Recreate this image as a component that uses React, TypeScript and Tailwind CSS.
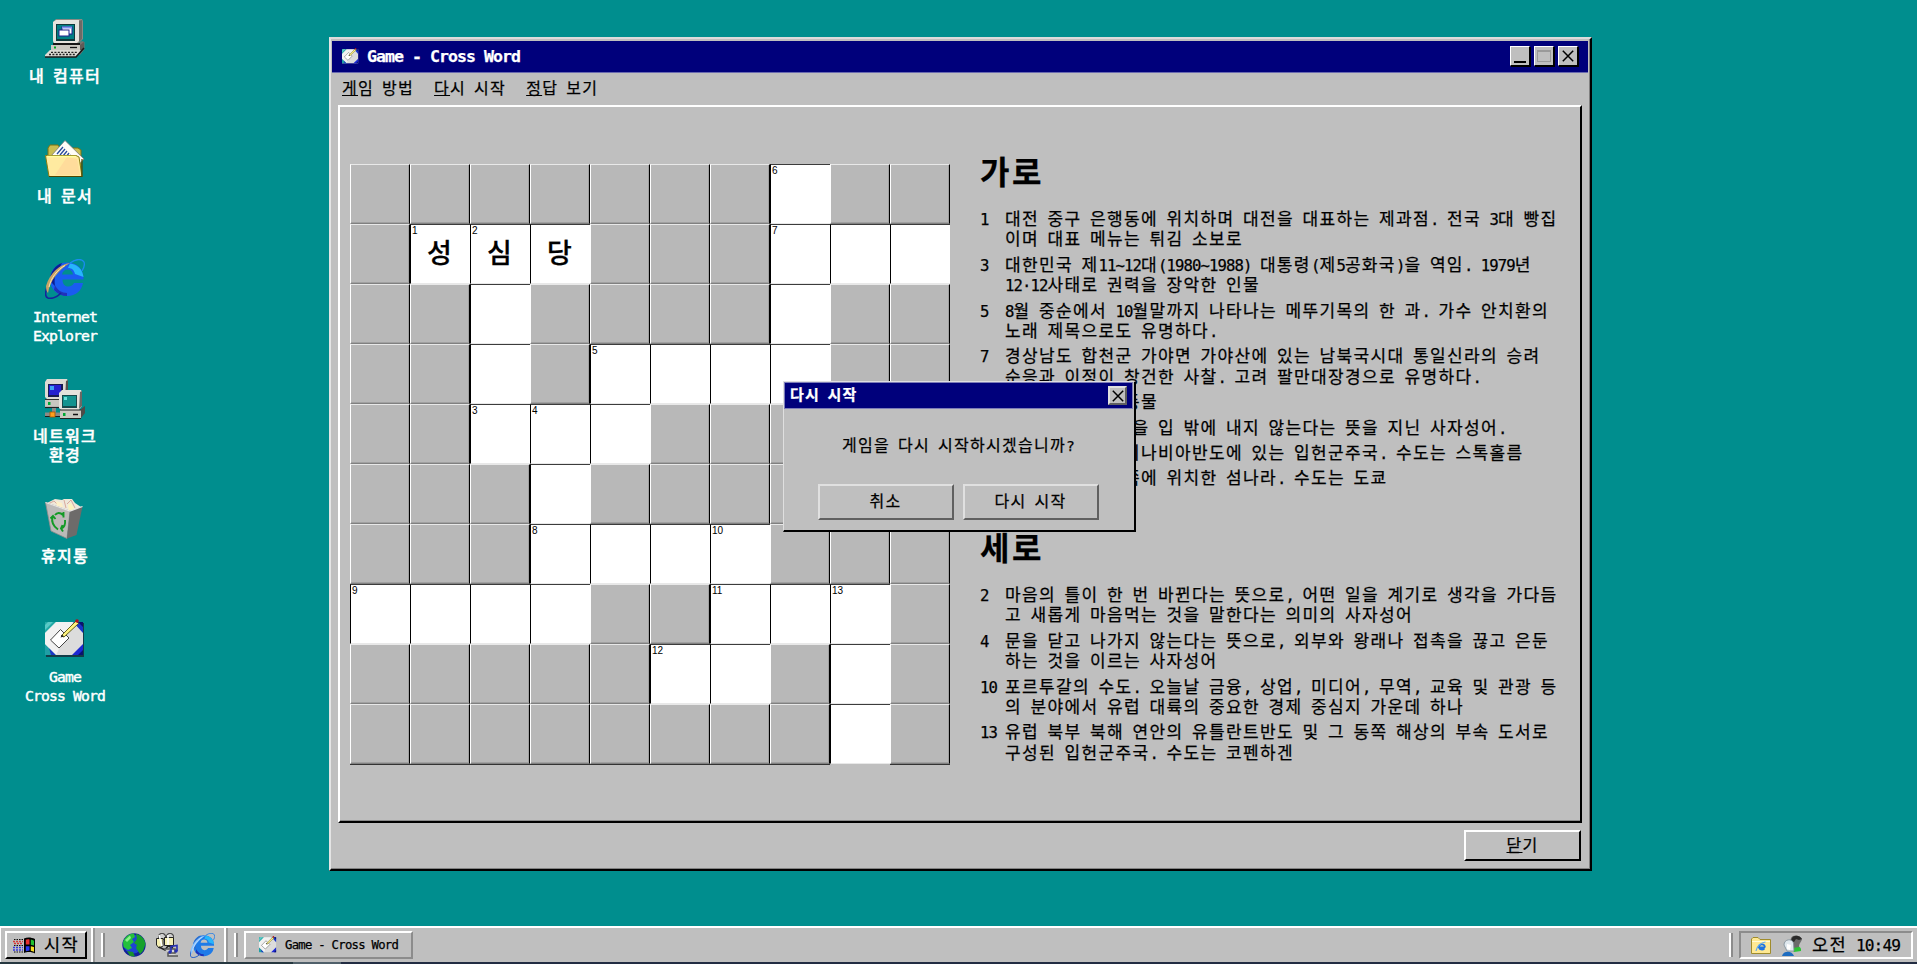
import { Fragment, type ReactNode } from "react";

/* ---------- text ---------- */

// Half-width characters take half an em and Hangul takes a full em, as in a DOS-style bitmap face.
function T({ children }: { children: string }) {
  const runs = children.match(/[\uac00-\ud7a3]+|[^\uac00-\ud7a3]+/g) ?? [];
  return (
    <span className="whitespace-pre">
      {runs.map((run, i) =>
        /[\uac00-\ud7a3]/.test(run) ? (
          <span key={i} className="tracking-[0.08em]">
            {run}
          </span>
        ) : (
          <span key={i} className="text-[0.92em] tracking-[-0.0585em]">
            {run}
          </span>
        ),
      )}
    </span>
  );
}

/* ---------- icons ---------- */

function ComputerIcon({ className }: { className?: string }) {
  return (
    <svg viewBox="0 0 40 40" className={className}>
      <path d="M8 3 11 0H37L38 2V20L33 25H10L8 23Z" fill="#8a8a84" />
      <path d="M8 3 11 1H34V22L32 24H9L8 22Z" fill="#e6e4de" />
      <path d="M34 2 37 1V20L34 23Z" fill="#6d6a66" />
      <rect x="11" y="5" width="19" height="17" fill="#10393c" />
      <rect x="12" y="6" width="17" height="14" fill="#007f82" />
      <rect x="17" y="8" width="10" height="7" fill="#fff" stroke="#22228e" />
      <path d="M17 8.500H27" stroke="#7f8ff0" strokeWidth="2" />
      <rect x="14" y="11" width="10" height="6" fill="#fff" stroke="#22228e" />
      <path d="M8 24H34L37 22 39.500 23V30L35 36H28" fill="#77736f" />
      <rect x="8" y="24" width="27" height="2" fill="#161616" />
      <path d="M6 26H35V32H6Z" fill="#cbc9c2" />
      <path d="M35 26 39 23V30L35 34Z" fill="#5f5c58" />
      <path d="M9 28.500H11" stroke="#00a51c" strokeWidth="2" />
      <path d="M25 28.500H32" stroke="#111" strokeWidth="1.300" />
      <path d="M5 31H36L31 38H0V36Z" fill="#dedcd6" />
      <path d="M0 38H31L39 29" stroke="#1a1a1a" strokeWidth="1.600" fill="none" />
      <path d="M6 33.300H32M4 35.500H30" stroke="#222" strokeWidth="1.300" strokeDasharray="2 1.400" />
    </svg>
  );
}

function DocumentsIcon({ className }: { className?: string }) {
  return (
    <svg viewBox="0 0 40 40" className={className}>
      <path d="M3 16V9L5 6H13L15 9H33L36 11V35H4Z" fill="#c9bd52" stroke="#7c7310" />
      <path d="M20 1.500 39 20 28 32 6 17Z" fill="#fffdf7" stroke="#777" strokeWidth=".8" />
      <path d="M12 15 18 8M15 16 20 10M18 17 22 12M21 18 24 14M24 18 26 16" stroke="#284b9c" strokeWidth="1.300" />
      <path d="M.5 16.500H31L34 18 37 37.500H4Z" fill="#ffeaa0" stroke="#8c7d10" />
      <path d="M22 18 32 20 35 36H10Z" fill="#ffcf98" opacity=".55" />
      <path d="M2 17.500H31" stroke="#ffff9c" strokeWidth="1.500" />
      <path d="M4 37.500H37V20" stroke="#514600" strokeWidth="1.200" fill="none" />
    </svg>
  );
}

function ExplorerIcon({ className, light }: { className?: string; light?: boolean }) {
  const body = light ? "#1f7be8" : "#1a5cf0";
  return (
    <svg viewBox="0 0 40 40" className={className}>
      <path
        d="M38.500 20.500H17.500C17.500 25 20 27.500 23 27.500 26 27.500 28 26 29 24H38C36.500 32 30.500 37 22.500 37 12.500 37 5 30 5 20.500 5 10.500 12.500 3.500 22 3.500 32 3.500 39 10 38.500 20.500ZM17 15.500H28C27.500 12 25.500 10.500 22.500 10.500 19.500 10.500 17.500 12.500 17 15.500Z"
        fill={body}
      />
      <path d="M25 4.500C32 5 37.500 10 38.500 18L30 15C29 11 27 9 23 9Z" fill="#27b6fb" />
      <path d="M5 22C5 13 10 6 17 4L14 10C10 14 9 18 10 27Z" fill={light ? "#2c6fd0" : "#0a1f95"} />
      <path d="M22 34C17 34 12 31 10 26L9 31C13 35 17 37 22 37Z" fill="#2031b8" />
      <path
        d="M25 4C31 -.5 37 -.5 39 3 40 6 39 9 37 12"
        fill="none"
        stroke={light ? "#1f7be8" : "#1a8cf0"}
        strokeWidth="1.300"
      />
      <path
        d="M2 28C0 34 0 38 3 39 7 40 12 38 16 34"
        fill="none"
        stroke={light ? "#2b62c8" : "#16239c"}
        strokeWidth="1.600"
      />
      <path d="M25 4C15 5 5 14 1 27 1 31 2 33 3 34 5 22 13 11 25 4Z" fill={light ? "#86c0ff" : "#c9a465"} />
      <path d="M20 6.500C12 11 6 19 4 28" stroke={light ? "#d6ecff" : "#f6e3b4"} strokeWidth="1" fill="none" />
    </svg>
  );
}

function NetworkIcon({ className }: { className?: string }) {
  return (
    <svg viewBox="0 0 40 40" className={className}>
      <path d="M0 3 2 0H22L23 2V18L20 20H2L0 18Z" fill="#dddbd4" />
      <path d="M21 2 23 1V18L20 20Z" fill="#55524e" />
      <rect x="3" y="5" width="15" height="13" fill="#181b52" />
      <rect x="4" y="6" width="12" height="10" fill="#2520cf" />
      <path d="M5 7H9V11H5Z" fill="#3da2f5" />
      <path d="M0 20H20V28H0Z" fill="#c9c7c0" />
      <path d="M0 20.500H18" stroke="#333" />
      <path d="M0 28.500H18" stroke="#222" strokeWidth="1.200" />
      <rect x="3" y="23" width="2.500" height="3" fill="#00a832" />
      <path d="M7 29H11V34H7Z" fill="#8d8a85" />
      <path d="M0 35.500H17" stroke="#8d8a85" strokeWidth="4" />
      <path d="M0 37.500H17" stroke="#1d1d1d" />
      <rect x="5" y="33" width="5" height="5" fill="#ffa01c" stroke="#a85600" strokeWidth=".8" />
      <path d="M14 14 17 11H36L37 13V27L34 31H16L14 29Z" fill="#e4e2dc" />
      <path d="M35 13 37 12V27L34 30Z" fill="#6b6864" />
      <rect x="17" y="16" width="15" height="13" fill="#16494b" />
      <rect x="18" y="17" width="13" height="10" fill="#13938f" />
      <path d="M19 18H22V21H19Z" fill="#6be0dc" />
      <path d="M36 30 40 27V34L36 39Z" fill="#4e4b48" />
      <path d="M15 31H36V39H15Z" fill="#cbc9c2" />
      <path d="M15 31H36M15 39.500H36" stroke="#222" strokeWidth="1.200" />
      <rect x="18" y="34" width="2.500" height="3" fill="#00a832" />
      <path d="M28 35.500H33" stroke="#111" strokeWidth="1.500" />
    </svg>
  );
}

function RecycleIcon({ className }: { className?: string }) {
  return (
    <svg viewBox="0 0 40 40" className={className}>
      <path d="M2 4 10 0 17 1 19 0H27L30 4 36 8 26 13 8 9Z" fill="#efe8da" />
      <path d="M3 5 9 2 15 8M19 1 21 9M22 5 26 1 30 9" stroke="#d9a99c" strokeWidth="1" fill="none" />
      <path d="M23 6 26 4 30 11 24 12Z" fill="#fdf3bd" />
      <path d="M11 2 17 4 18 9 12 8Z" fill="#fdf0c8" />
      <path d="M.5 3.500 25 12 22 39.500 6 32Z" fill="#bcbab9" stroke="#8e8c8b" strokeWidth=".8" />
      <path d="M25 12 37.500 7.500 31.500 36 22 39.500Z" fill="#6d6b6a" />
      <path d="M.5 3.500 25 12 37.500 7.500" stroke="#e8e6e4" strokeWidth="1.200" fill="none" />
      <path d="M10 16C12 13.500 15 13 18 16M18.500 13V18.500" stroke="#139a26" strokeWidth="1.900" fill="none" />
      <path d="M7.500 18C6.500 22 8 27 13 30.500M5.500 19.500 8 17 10.500 20" stroke="#139a26" strokeWidth="1.900" fill="none" />
      <path d="M20 21C20.500 25 19.500 28 16.500 29.500M17.500 26 16 29.500 18 32.500" stroke="#139a26" strokeWidth="1.900" fill="none" />
    </svg>
  );
}

function CrosswordIcon({ className, clear }: { className?: string; clear?: boolean }) {
  return (
    <svg viewBox="0 0 40 40" className={className}>
      {!clear && <path d="M1 4H39V38H1Z" fill="#123c48" />}
      <rect x="0" y="3" width="38" height="33" fill="#dcdcdc" />
      <path d="M0 3H11L0 14Z" fill="#21a9a6" />
      <path d="M3 3H8L0 11V6Z" fill="#7fe0dc" opacity=".6" />
      <path d="M0 25 11 36H0Z" fill="#1f9fa5" />
      <path d="M4 29 11 36H6Z" fill="#1b37c4" />
      <path d="M38 3V14L28 3Z" fill="#1735c8" />
      <path d="M38 25V36H27Z" fill="#1b28d2" />
      <path d="M38 3V8L33 3ZM38 31V36H33Z" fill="#0a1170" />
      <path d="M11 3H28L14 30 11 36 0 25V14Z" fill="#fff" opacity=".6" />
      <path d="M5.500 21 15.500 10.500 24 19 14 29Z" fill="#fff" stroke="#444" strokeWidth="1" />
      <path d="M16 17 31 2 33.500 4.500 19 18Z" fill="#fff27e" stroke="#57520d" strokeWidth=".9" />
      <path d="M15.500 18.500 17 15.500 19 17.500Z" fill="#222" />
      <circle cx="32" cy="2" r="1.800" fill="#b30f1d" />
    </svg>
  );
}

function WindowsFlag({ className }: { className?: string }) {
  return (
    <svg viewBox="0 0 22 17" className={className}>
      <path d="M11 1.500C14 0 18 0 22 2V16.500C19 14.500 14 14.500 11 16Z" fill="#000" />
      <path d="M12.800 2.800C14 2 15.300 2 16.500 2.400V7.500H12.800Z" fill="#e83030" />
      <path d="M17.800 2.600C19 2.900 20 3.200 21 3.800V8.500L17.800 7.700Z" fill="#20c030" />
      <path d="M12.800 9.200H16.500V13.600L12.800 14.200Z" fill="#2838f0" />
      <path d="M17.800 9.200 21 10V14.800L17.800 13.800Z" fill="#f8e020" />
      <path d="M1 2.500H10M1 8.500H10M1 15H10" stroke="#111" strokeWidth="1.200" strokeDasharray="1.500 1" />
      <path d="M0 4.500H10M1 6.500H10" stroke="#d83838" strokeWidth="1.300" strokeDasharray="2 1" />
      <path d="M0 10.500H10M0 13H10" stroke="#3838e0" strokeWidth="1.300" strokeDasharray="2 1" />
    </svg>
  );
}

function GlobeIcon({ className }: { className?: string }) {
  return (
    <svg viewBox="0 0 24 24" className={className}>
      <circle cx="12" cy="12" r="11.700" fill="#12209a" />
      <circle cx="11" cy="11" r="9.500" fill="#1d44d4" />
      <path d="M1 9C3 3 8 .5 12 .5L13 4 10 6 12 9 8 12 10 15 6 17 1.500 14Z" fill="#25c03c" />
      <path d="M14 1C20 2 23 7 23.500 11L21 18 18 21 14 15 15 12 12 10 15 6Z" fill="#16a02c" />
      <path d="M5 18 11 19 13 23.500 8 23Z" fill="#17922b" />
      <path d="M3 7 8 2.500 9 5 5 9Z" fill="#8cf08a" />
    </svg>
  );
}

function MediaIcon({ className }: { className?: string }) {
  return (
    <svg viewBox="0 0 24 24" className={className}>
      <rect x="2.500" y=".5" width="7" height="6" rx="3" fill="#cfcfcf" stroke="#222" />
      <rect x="10.500" y=".5" width="7" height="6" rx="3" fill="#cfcfcf" stroke="#222" />
      <path d="M.5 5.500H7V13L3 15 .5 12Z" fill="#f5efb2" stroke="#222" />
      <path d="M8.500 4.500H17.500V12.500H8.500Z" fill="#f5efb2" stroke="#222" />
      <path d="M3 2 6 13M12 2 12 12" stroke="#fff" strokeWidth="1.500" />
      <path d="M3 14 9 17 12 13 17 15" stroke="#222" strokeWidth="1.500" fill="none" />
      <path d="M8 16H19V20H12V23H22" stroke="#555" strokeWidth="1.500" fill="#d8d8d8" />
      <path d="M15 19V13.500L21 12.500V18" stroke="#2630b4" strokeWidth="1.600" fill="none" />
      <circle cx="14" cy="19" r="1.700" fill="#2630b4" />
      <circle cx="20" cy="18" r="1.700" fill="#2630b4" />
    </svg>
  );
}

function FolderGlobeIcon({ className }: { className?: string }) {
  return (
    <svg viewBox="0 0 20 17" className={className}>
      <path d="M.5 16.500V2L2 .5H7L9 2.500H19.500V16.500Z" fill="#ffe993" stroke="#a08c2c" />
      <path d="M1 4.500H19" stroke="#fffbd8" />
      <path d="M14 10.500H8C8.500 12.500 11 13 13.500 12" stroke="#1f74e0" strokeWidth="1.800" fill="none" />
      <path d="M8 10.500C8 6.500 13.500 6 14 10.500" stroke="#1f74e0" strokeWidth="1.800" fill="none" />
      <path d="M14.500 5C10 5.500 6 9 5 14" stroke="#5fa8ee" strokeWidth="1.200" fill="none" />
    </svg>
  );
}

function PeopleIcon({ className }: { className?: string }) {
  return (
    <svg viewBox="0 0 20 21" className={className}>
      <path d="M10 14C10 11 18 10 19 14V16L12 17Z" fill="#2bc435" />
      <path d="M9 3C11 -1 18 0 20 4 19.500 7 17 8 17 12L11 13 8 7Z" fill="#6a6a6a" />
      <path d="M10 3C12 -.5 18 0 20 4L17 5 14 4 12 7 9 6Z" fill="#2a2a2a" />
      <path d="M2 10C2 4 10 3 11.500 8L12 16H5Z" fill="#dfe8ee" stroke="#7b8a94" strokeWidth=".8" />
      <path d="M5 9 9 10 8 15 5 14Z" fill="#fff" />
      <path d="M0 21C1 15.500 10 15 12 21Z" fill="#1d6cc0" />
    </svg>
  );
}

function CrossMark({ className }: { className?: string }) {
  return (
    <svg viewBox="0 0 12 12" className={className}>
      <path d="M.8 .8 11.200 11.200M11.200 .8 .8 11.200" stroke="#000" strokeWidth="1.500" />
    </svg>
  );
}

/* ---------- data ---------- */

const GRID = [
  ".......#..",
  ".###...###",
  "..#....#..",
  "..#.####..",
  "..###.....",
  "...#......",
  "...####...",
  "####..###.",
  ".....##.#.",
  "........#.",
];

const NUMBERS: Record<string, number> = {
  "0-7": 6,
  "1-1": 1,
  "1-2": 2,
  "1-7": 7,
  "3-4": 5,
  "4-2": 3,
  "4-3": 4,
  "6-3": 8,
  "6-6": 10,
  "7-0": 9,
  "7-6": 11,
  "7-8": 13,
  "8-5": 12,
};

const LETTERS: Record<string, string> = { "1-1": "성", "1-2": "심", "1-3": "당" };

type Clue = { no: number; lines: string[] };

const ACROSS: Clue[] = [
  { no: 1, lines: ["대전 중구 은행동에 위치하며 대전을 대표하는 제과점. 전국 3대 빵집", "이며 대표 메뉴는 튀김 소보로"] },
  { no: 3, lines: ["대한민국 제11~12대(1980~1988) 대통령(제5공화국)을 역임. 1979년", "12·12사태로 권력을 장악한 인물"] },
  { no: 5, lines: ["8월 중순에서 10월말까지 나타나는 메뚜기목의 한 과. 가수 안치환의", "노래 제목으로도 유명하다."] },
  { no: 7, lines: ["경상남도 합천군 가야면 가야산에 있는 남북국시대 통일신라의 승려", "순응과 이정이 창건한 사찰. 고려 팔만대장경으로 유명하다."] },
  { no: 8, lines: ["중생대에 살던 동물"] },
  { no: 9, lines: ["하려던 이야기들을 입 밖에 내지 않는다는 뜻을 지닌 사자성어."] },
  { no: 11, lines: ["유럽 북부 스칸디나비아반도에 있는 입헌군주국. 수도는 스톡홀름"] },
  { no: 12, lines: ["아시아 대륙 동쪽에 위치한 섬나라. 수도는 도쿄"] },
];

const DOWN: Clue[] = [
  { no: 2, lines: ["마음의 틀이 한 번 바뀐다는 뜻으로, 어떤 일을 계기로 생각을 가다듬", "고 새롭게 마음먹는 것을 말한다는 의미의 사자성어"] },
  { no: 4, lines: ["문을 닫고 나가지 않는다는 뜻으로, 외부와 왕래나 접촉을 끊고 은둔", "하는 것을 이르는 사자성어"] },
  { no: 10, lines: ["포르투갈의 수도. 오늘날 금융, 상업, 미디어, 무역, 교육 및 관광 등", "의 분야에서 유럽 대륙의 중요한 경제 중심지 가운데 하나"] },
  { no: 13, lines: ["유럽 북부 북해 연안의 유틀란트반도 및 그 동쪽 해상의 부속 도서로", "구성된 입헌군주국. 수도는 코펜하겐"] },
];

/* ---------- pieces ---------- */

function DesktopItem({ icon, lines }: { icon: ReactNode; lines: string[] }) {
  return (
    <div className="flex h-[120px] w-[130px] flex-col items-center">
      {icon}
      <div className="mt-2 text-center text-[16px] leading-[19px] font-medium text-white [-webkit-text-stroke:0.45px]">
        {lines.map((l) => (
          <div key={l} className="h-[19px]">
            <T>{l}</T>
          </div>
        ))}
      </div>
    </div>
  );
}

function Cell({ r, c }: { r: number; c: number }) {
  const key = `${r}-${c}`;
  const open = GRID[r][c] === "#";
  if (!open) {
    return (
      <div
        className={
          "size-[60px] border border-t-[#e8e8e8] border-r-black border-b-[#808080] border-l-white bg-[#b8b8b8] inset-shadow-[-1px_-1px_0_#a0a0a0] " +
          (r === 9 ? "shadow-[0_1px_0_#333]" : "")
        }
      />
    );
  }
  return (
    <div className="relative flex size-[60px] items-center justify-center border-t border-b border-l border-t-[#3c3c3c] border-b-[#e8e8e8] border-l-black bg-white">
      {NUMBERS[key] && (
        <span className="absolute top-0 left-px font-['Liberation_Sans',sans-serif] text-[10px] leading-[11px] [-webkit-text-stroke:0]">
          {NUMBERS[key]}
        </span>
      )}
      {LETTERS[key] && <span className="mr-0.5 mb-0.5 text-[27px] leading-none font-medium">{LETTERS[key]}</span>}
    </div>
  );
}

function ClueList({ title, clues }: { title: string; clues: Clue[] }) {
  return (
    <section>
      <h2 className="h-[38px] text-[32px] leading-[38px] font-bold">
        <T>{title}</T>
      </h2>
      <dl className="mt-[17px] grid grid-cols-[25px_1fr] gap-y-[5px] text-[17px] leading-[20.4px] whitespace-nowrap">
        {clues.map((clue) => (
          <Fragment key={clue.no}>
            <dt className="h-[20.4px]">
              <T>{String(clue.no)}</T>
            </dt>
            <dd>
              {clue.lines.map((l) => (
                <div key={l} className="h-[20.4px]">
                  <T>{l}</T>
                </div>
              ))}
            </dd>
          </Fragment>
        ))}
      </dl>
    </section>
  );
}

const capButton =
  "flex size-5 items-center justify-center border border-t-white border-r-black border-b-black border-l-white bg-[#bfbfbf] shadow-[1px_1px_0_#000]";

function GameWindow() {
  return (
    <div className="absolute top-[37px] left-[329px] flex h-[834px] w-[1263px] flex-col border-2 border-t-[#dcdcdc] border-r-black border-b-black border-l-[#e4e4e4] bg-[#bfbfbf] inset-shadow-[-1px_-1px_0_#808080]">
      <header className="mt-0.5 mr-0.5 ml-px flex h-[32px] items-center border-b border-[#6a6ab0] bg-[#00007b] pr-[10px] pb-px pl-[10px] text-white">
        <CrosswordIcon clear className="size-[17px]" />
        <h1 className="ml-2 flex-1 text-[18px] leading-[22px] font-bold">
          <T>Game - Cross Word</T>
        </h1>
        <div className="flex gap-1">
          <span className={capButton}>
            <span className="mt-3 h-[2px] w-3 bg-black" />
          </span>
          <span className={capButton}>
            <span className="h-[12px] w-[14px] border border-t-2 border-[#9a9a9a]" />
          </span>
          <span className={capButton}>
            <CrossMark className="size-3" />
          </span>
        </div>
      </header>
      <nav className="flex h-[32px] items-center gap-5 pl-[11px] text-[16px] leading-[20px]">
        {[
          ["게", "임 방법"],
          ["다", "시 시작"],
          ["정", "답 보기"],
        ].map(([k, rest]) => (
          <span key={k}>
            <u className="underline decoration-1 underline-offset-1">
              <T>{k}</T>
            </u>
            <T>{rest}</T>
          </span>
        ))}
      </nav>
      <main className="mx-[7px] mr-2 flex h-[718px] border-2 border-t-white border-r-black border-b-black border-l-white pl-[10px] inset-shadow-[0_-1px_0_#8a8a8a]">
        <div className="mt-[57px] grid h-[600px] grid-cols-[repeat(10,60px)]">
          {GRID.map((row, r) => row.split("").map((_, c) => <Cell key={`${r}-${c}`} r={r} c={c} />))}
        </div>
        <div className="ml-[30px] flex flex-col pt-[47px]">
          <div className="h-[376px]">
            <ClueList title="가로" clues={ACROSS} />
          </div>
          <ClueList title="세로" clues={DOWN} />
        </div>
      </main>
      <footer className="mt-[7px] flex justify-end pr-[9px]">
        <button className="flex h-[31px] w-[117px] items-center justify-center border-2 border-t-white border-r-black border-b-black border-l-white text-[16px] leading-5">
          <span className="underline decoration-1 underline-offset-1">
            <T>닫</T>
          </span>
          <T>기</T>
        </button>
      </footer>
    </div>
  );
}

function RestartDialog() {
  const button =
    "flex h-[36px] w-[136px] items-center justify-center border-2 border-t-[#e0e0e0] border-r-[#606060] border-b-[#606060] border-l-[#e0e0e0] text-[16px] leading-5";
  return (
    <div className="absolute top-[381px] left-[783px] flex h-[151px] w-[353px] flex-col border border-t-[#dfdfdf] border-r-2 border-b-2 border-r-black border-b-black border-l-[#dfdfdf] bg-[#bfbfbf]">
      <header className="mr-px flex h-[27px] items-center justify-between border border-[#7c7cb8] bg-[#00007b] pr-[5px] pl-[5px] text-white">
        <span className="mb-0.5 text-[15px] leading-5 font-bold">
          <T>다시 시작</T>
        </span>
        <span className="flex size-[19px] items-center justify-center border-2 border-t-[#e0e0e0] border-r-[#606060] border-b-[#606060] border-l-[#e0e0e0] bg-[#bfbfbf]">
          <CrossMark className="size-3" />
        </span>
      </header>
      <p className="mt-[27px] pr-0.5 text-center text-[16px] leading-5">
        <T>게임을 다시 시작하시겠습니까?</T>
      </p>
      <div className="mt-[28px] flex justify-center gap-[9px] pr-0.5">
        <button className={button}>
          <T>취소</T>
        </button>
        <button className={button}>
          <T>다시 시작</T>
        </button>
      </div>
    </div>
  );
}

function Grip({ className = "" }: { className?: string }) {
  return <span className={"h-6 w-1 shrink-0 border-r-2 border-l-2 border-r-[#8c8c8c] border-l-white " + className} />;
}

function Taskbar() {
  return (
    <div className="flex h-9 items-center border-t-2 border-l border-white bg-[#bfbfbf]">
      <button className="ml-1 flex h-7 w-[82px] items-center border-2 border-t-white border-r-black border-b-black border-l-white pl-1.5 text-[17.6px] leading-6">
        <WindowsFlag className="mr-[9px] h-[17px] w-[22px]" />
        <T>시작</T>
      </button>
      <span className="ml-1 h-[34px] w-1 border-r-2 border-l-2 border-r-[#9a9a9a] border-l-white" />
      <Grip className="ml-1.5" />
      <GlobeIcon className="ml-[17px] size-6" />
      <MediaIcon className="ml-[10px] size-6" />
      <ExplorerIcon light className="ml-[10px] size-[25px]" />
      <span className="ml-[9px] h-[34px] w-1 border-r-2 border-l-2 border-r-[#9a9a9a] border-l-white" />
      <Grip className="ml-1.5" />
      <div className="ml-1.5 flex h-7 w-[169px] items-center border-2 border-t-white border-r-[#8c8c8c] border-b-[#8c8c8c] border-l-white pl-[13px]">
        <CrosswordIcon clear className="mr-2 size-[18px]" />
        <span className="text-[13.33px] leading-5">
          <T>Game - Cross Word</T>
        </span>
      </div>
      <div className="flex-1" />
      <Grip />
      <div className="mr-1 ml-1.5 flex h-7 w-[174px] items-center border-2 border-t-[#8c8c8c] border-r-white border-b-white border-l-[#8c8c8c] pl-[10px] text-[17.6px] leading-6">
        <FolderGlobeIcon className="h-[17px] w-5" />
        <PeopleIcon className="mr-[10px] ml-[11px] h-[21px] w-5" />
        <T>오전 10:49</T>
      </div>
    </div>
  );
}

export default function App() {
  return (
    <div className="relative flex h-[964px] w-[1917px] flex-col overflow-hidden bg-[#008e8e] font-['DejaVu_Sans_Mono','Noto_Sans_CJK_KR',monospace] text-black [-webkit-text-stroke:0.25px]">
      <div className="flex flex-1 flex-col pt-[19px]">
        <DesktopItem icon={<ComputerIcon className="size-10" />} lines={["내 컴퓨터"]} />
        <DesktopItem icon={<DocumentsIcon className="size-10" />} lines={["내 문서"]} />
        <DesktopItem icon={<ExplorerIcon className="size-10" />} lines={["Internet", "Explorer"]} />
        <DesktopItem icon={<NetworkIcon className="size-10" />} lines={["네트워크", "환경"]} />
        <DesktopItem icon={<RecycleIcon className="size-10" />} lines={["휴지통"]} />
        <DesktopItem icon={<CrosswordIcon className="size-10" />} lines={["Game", "Cross Word"]} />
      </div>
      <GameWindow />
      <RestartDialog />
      <Taskbar />
      <div className="flex h-0.5 bg-[#222c42]">
        <span className="w-[293px] bg-[#263840]" />
        <span className="w-[48px] bg-[#50606a]" />
      </div>
    </div>
  );
}
